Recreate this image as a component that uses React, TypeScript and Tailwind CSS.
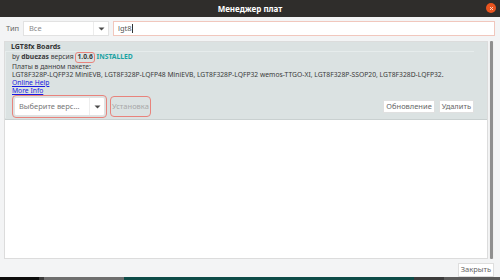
import React from 'react'

function Caret() {
  return (
    <svg width="7" height="4" viewBox="0 0 7 4" className="shrink-0">
      <path d="M0.5 0.5 L6.5 0.5 L3.5 3.5 Z" fill="#4a4a4a" />
    </svg>
  )
}

export default function App() {
  return (
    <div
      className="w-[500px] h-[280px] bg-[#f3f4f5] flex flex-col overflow-hidden text-[#3a3a3a]"
      style={{ fontFamily: '"Noto Sans", "DejaVu Sans", sans-serif' }}
    >
      {/* Title bar */}
      <div className="h-[17px] shrink-0 bg-[#2f2d2b] flex items-center relative">
        <span className="flex-1 text-center text-white text-[8px] font-bold leading-none">Менеджер плат</span>
        <div className="absolute right-[4px] top-[3px] w-[10px] h-[10px] rounded-full bg-[#e9541f] flex items-center justify-center">
          <svg width="5" height="5" viewBox="0 0 5 5">
            <path d="M1 1 L4 4 M4 1 L1 4" stroke="#fbd3c0" strokeWidth="1" />
          </svg>
        </div>
      </div>

      {/* Filter row */}
      <div className="flex items-center h-[15px] mt-[4px] pl-[6px] pr-[5px] gap-[3px] shrink-0">
        <span className="text-[7.5px] text-[#666] w-[14px]">Тип</span>
        <div className="w-[86px] h-[15px] bg-white border border-[#e2e2e2] flex items-center">
          <span className="flex-1 pl-[5px] text-[7.5px] text-[#8a8a8a]">Все</span>
          <div className="w-[15px] h-full border-l border-[#ececec] flex items-center justify-center">
            <Caret />
          </div>
        </div>
        <div className="flex-1 h-[15px] ml-[1px] bg-white border border-[#f1c7bd] flex items-center pl-[4px]">
          <span className="text-[7.5px] text-[#555]">lgt8</span>
          <span className="w-px h-[9px] bg-[#333]" />
        </div>
      </div>

      {/* List */}
      <div className="flex mt-[5px] ml-[4px] mr-[6px] h-[218px] shrink-0">
        <div className="flex-1 bg-white border border-[#dcdcdc] flex flex-col">
          <div className="bg-[#dbe2e2] border-b border-[#c9d0d0] flex flex-col pl-[6px] pr-[13px] pb-[1px]">
            <div className="text-[7px] font-bold text-[#333] leading-[9px]">LGT8fx Boards</div>
            <div className="border-t border-l border-[#e6ecec] -ml-[6px] pl-[6px] flex flex-col">
              <div className="flex items-center h-[11px] text-[6.75px] leading-none">
                <span>by&nbsp;</span>
                <span className="font-bold">dbuezas</span>
                <span>&nbsp;версия&nbsp;</span>
                <span className="font-bold border border-[#e8837c] rounded-[3px] px-[1px] h-[11px] flex items-center">1.0.6</span>
                <span className="text-[#1aa3a3] font-bold">&nbsp;INSTALLED</span>
              </div>
              <div className="text-[6.75px] leading-[8px]">Платы в данном пакете:</div>
              <div className="text-[6.75px] leading-[8px] whitespace-nowrap">
                LGT8F328P-LQFP32 MiniEVB, LGT8F328P-LQFP48 MiniEVB, LGT8F328P-LQFP32 wemos-TTGO-XI, LGT8F328P-SSOP20, LGT8F328D-LQFP32.
              </div>
              <div className="text-[6.75px] leading-[8px] text-[#1a1ae0] underline">Online Help</div>
              <div className="text-[6.75px] leading-[8px] text-[#1a1ae0] underline">More Info</div>
              <div className="flex items-center">
                <div className="border border-[#e8837c] rounded-[4px] p-[1px]">
                  <div className="w-[91px] h-[19px] bg-white border border-[#e2e2e2] flex items-center rounded-[2px]">
                    <span className="flex-1 pl-[4px] text-[7.5px] text-[#777] whitespace-nowrap">Выберите верс...</span>
                    <div className="w-[15px] h-full border-l border-[#eeeeee] flex items-center justify-center">
                      <Caret />
                    </div>
                  </div>
                </div>
                <div className="ml-[3px] border border-[#e8837c] rounded-[4px] h-[21px] px-[1px] flex items-center">
                  <span className="text-[7.5px] text-[#a8a8a8]">Установка</span>
                </div>
                <div className="flex-1" />
                <div className="h-[13px] bg-white border border-[#e0e0e0] px-[2px] flex items-center text-[7.5px] text-[#666]">Обновление</div>
                <div className="ml-[4px] h-[13px] bg-white border border-[#e0e0e0] px-[2px] flex items-center text-[7.5px] text-[#666]">Удалить</div>
              </div>
            </div>
          </div>
          <div className="flex-1" />
        </div>
        <div className="w-[5px] ml-[1px] flex justify-center bg-[#f0f0f0]">
          <div className="w-[3px] h-full bg-[#8f8f8f] rounded-[1px]" />
        </div>
      </div>

      {/* Footer */}
      <div className="flex justify-end pr-[6px] mt-[4px] shrink-0">
        <div className="h-[14px] bg-white border border-[#dedede] px-[2px] flex items-center text-[7.5px] text-[#666]">Закрыть</div>
      </div>

      <div className="flex-1" />
      {/* Taskbar strip */}
      <div className="h-[3px] flex shrink-0">
        <div className="w-[39px] bg-[#0d0d0d]" />
        <div className="w-[5px] bg-[#3a3a3a]" />
        <div className="w-[80px] bg-[#6e6e6e]" />
        <div className="w-[290px] bg-[#0e4c48]" />
        <div className="w-[30px] bg-[#3b3b3b]" />
        <div className="flex-1 bg-[#5a5a5a]" />
      </div>
    </div>
  )
}
